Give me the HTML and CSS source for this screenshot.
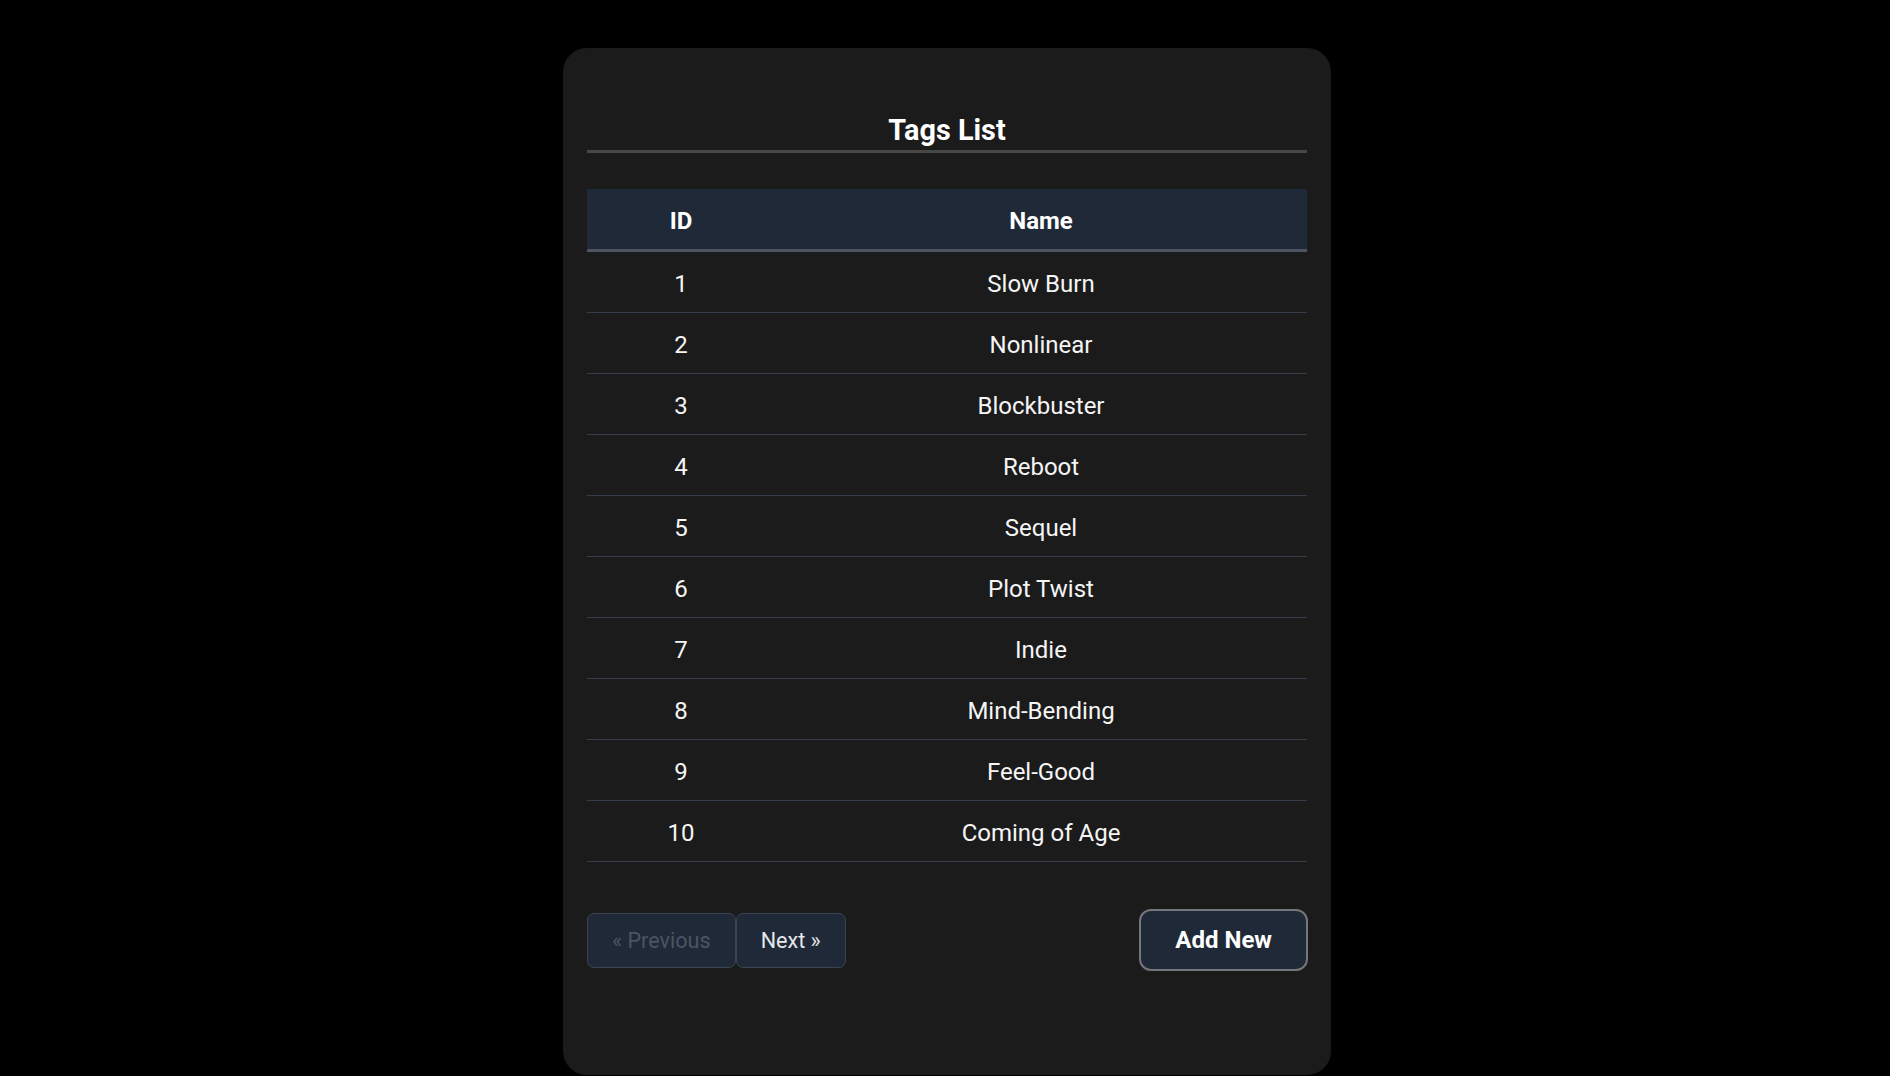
FILE: index.html
```html
<!DOCTYPE html>
<html lang="en">
<head>
<meta charset="utf-8">
<title>Tags List</title>
<link rel="stylesheet" href="styles.css">
</head>
<body>
<div class="page">
  <main class="card">
    <h2 class="title">Tags List</h2>
    <table class="tags">
      <colgroup><col class="c-id"><col class="c-name"></colgroup>
      <thead>
        <tr><th>ID</th><th>Name</th></tr>
      </thead>
      <tbody>
        <tr><td>1</td><td>Slow Burn</td></tr>
        <tr><td>2</td><td>Nonlinear</td></tr>
        <tr><td>3</td><td>Blockbuster</td></tr>
        <tr><td>4</td><td>Reboot</td></tr>
        <tr><td>5</td><td>Sequel</td></tr>
        <tr><td>6</td><td>Plot Twist</td></tr>
        <tr><td>7</td><td>Indie</td></tr>
        <tr><td>8</td><td>Mind-Bending</td></tr>
        <tr><td>9</td><td>Feel-Good</td></tr>
        <tr><td>10</td><td>Coming of Age</td></tr>
      </tbody>
    </table>
    <div class="actions">
      <div class="pager">
        <button class="pg-btn" disabled>« Previous</button>
        <button class="pg-btn">Next »</button>
      </div>
      <button class="add-btn">Add New</button>
    </div>
  </main>
</div>
</body>
</html>
```
FILE: styles.css
```css
html, body {
  margin: 0;
  padding: 0;
  background: #000;
}
body {
  font-family: Roboto, "Liberation Sans", sans-serif;
  color: #f5f5f5;
  overflow: hidden;
}
.page {
  display: flex;
  justify-content: center;
  padding: 48px 0 0 4px;
}
.card {
  width: 720px;
  padding: 64px 24px 104px;
  background: #1b1b1b;
  border-radius: 24px;
}
.title {
  margin: 0;
  padding: 0 0 2px;
  font-size: 28.8px;
  line-height: 36px;
  font-weight: 700;
  text-align: center;
  color: #fff;
  border-bottom: 3px solid #474747;
}
.tags {
  width: 100%;
  margin-top: 36px;
  border-collapse: separate;
  border-spacing: 0;
  table-layout: fixed;
}
.c-id { width: 188px; }
.tags th,
.tags td {
  padding: 14px 0 10px;
  font-size: 24px;
  line-height: 36px;
  text-align: center;
}
.tags th {
  background: #1f2937;
  color: #fff;
  font-weight: 700;
  border-bottom: 3px solid #4f5560;
}
.tags td {
  font-weight: 400;
  color: #f5f5f5;
  border-bottom: 1px solid #353d4a;
}
.actions {
  margin-top: 47px;
  display: flex;
  justify-content: space-between;
  align-items: center;
}
.pager {
  display: flex;
}
.pg-btn {
  font-family: inherit;
  font-size: 21.6px;
  line-height: 31px;
  padding: 11px 24px;
  background: #1f2937;
  color: #e5e7eb;
  border: 1px solid #3b4452;
  border-radius: 7px;
  cursor: pointer;
}
.pg-btn:disabled {
  color: #4b5563;
  cursor: default;
}
.add-btn {
  font-family: inherit;
  font-size: 24px;
  font-weight: 700;
  line-height: 34px;
  padding: 12px 34px;
  margin-right: -1px;
  background: #1f2937;
  color: #fff;
  border: 2px solid #74767c;
  border-radius: 12px;
  cursor: pointer;
}
```
